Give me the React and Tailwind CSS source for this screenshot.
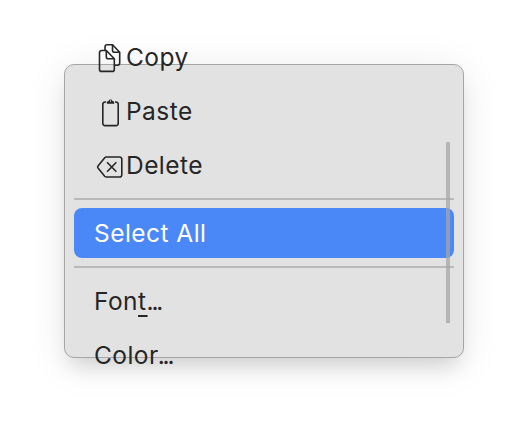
function CopyIcon() {
  return (
    <svg className="absolute left-[24px] top-[11px]" width="26" height="32" viewBox="0 0 26 32" fill="none" stroke="#262626" strokeWidth="1.6" strokeLinejoin="round">
      <path d="M7 7.5V4a2.2 2.2 0 0 1 2.2-2.2h5.3l7.2 7.4V20a2.2 2.2 0 0 1-2.2 2.2h-2.8" />
      <path d="M14.5 1.8v5.4a2 2 0 0 0 2 2h5.2" />
      <path d="M3.5 7.5h4.8l8 8.3v10.6a2 2 0 0 1-2 2H3.5a2 2 0 0 1-2-2V9.5a2 2 0 0 1 2-2Z" />
      <path d="M8.3 7.5v6.3a2 2 0 0 0 2 2h6" />
    </svg>
  );
}

function PasteIcon() {
  return (
    <svg className="absolute left-[24px] top-[11px]" width="26" height="32" viewBox="0 0 26 32" fill="none" stroke="#262626" strokeWidth="1.6">
      <path d="M8 5H7a2.2 2.2 0 0 0-2.2 2.2v19.2A2.2 2.2 0 0 0 7 28.6h11a2.2 2.2 0 0 0 2.2-2.2V7.2A2.2 2.2 0 0 0 18 5h-1" />
      <path d="M8.8 6.7V5.2c0-.8.6-1.2 1.7-1.3a2.1 2.1 0 0 1 4 0c1.1.1 1.7.5 1.7 1.3v1.5Z" fill="#262626" stroke="none" />
      <circle cx="12.5" cy="4" r="0.7" fill="#e2e2e2" stroke="none" />
    </svg>
  );
}

function DeleteIcon() {
  return (
    <svg className="absolute left-[22px] top-[14px]" width="28" height="26" viewBox="0 0 28 26" fill="none" stroke="#262626" strokeWidth="1.6" strokeLinejoin="round" strokeLinecap="round">
      <path d="M10.5 3h13a2.3 2.3 0 0 1 2.3 2.3v15.4a2.3 2.3 0 0 1-2.3 2.3h-13a2.5 2.5 0 0 1-1.8-.8L2 14a1.5 1.5 0 0 1 0-2l6.7-8.2a2.5 2.5 0 0 1 1.8-.8Z" />
      <path d="m11.5 8.7 8.4 8.6m0-8.6-8.4 8.6" />
    </svg>
  );
}

function MenuItem({ icon, selected, children }) {
  return (
    <div className={`relative flex h-[50px] items-center rounded-lg ${icon ? 'pl-[52px]' : 'pl-5'} ${selected ? 'bg-[#4a88f7] text-white' : 'text-[#262626]'}`}>
      {icon}
      <span className="whitespace-pre">{children}</span>
    </div>
  );
}

function Separator() {
  return <div className="my-2 h-[2px] bg-[#b9b9b9]"></div>;
}

export default function App() {
  return (
    <div className="h-[422px] w-[528px] overflow-hidden bg-white p-16 font-['Inter',sans-serif] text-[24.5px] leading-9 tracking-[0.45px]">
      <div className="relative h-[294px] w-[400px] rounded-[10px] border border-[#a6a6a6] bg-[#e2e2e2] px-[9px] shadow-[0_14px_20px_-6px_rgba(0,0,0,0.13),0_6px_40px_rgba(0,0,0,0.09)]">
        <div className="-mt-[33px] flex flex-col">
          <div className="flex flex-col gap-1">
            <MenuItem icon={<CopyIcon />}>Copy</MenuItem>
            <MenuItem icon={<PasteIcon />}>Paste</MenuItem>
            <MenuItem icon={<DeleteIcon />}>Delete</MenuItem>
          </div>
          <Separator />
          <MenuItem selected>Select All</MenuItem>
          <Separator />
          <div className="flex flex-col gap-1">
            <MenuItem>
              Fon<span className="underline decoration-[1.5px] underline-offset-[5px] tracking-[1.5px] [text-decoration-skip-ink:none]">t</span><span className="-ml-px tracking-[-2.2px]">...</span>
            </MenuItem>
            <MenuItem>Color<span className="-ml-px tracking-[-2.2px]">...</span></MenuItem>
          </div>
        </div>
        {/* scroll thumb */}
        <div className="absolute right-[13px] top-[77px] h-[181px] w-1 bg-[#a6a6a6]/75"></div>
      </div>
    </div>
  );
}
